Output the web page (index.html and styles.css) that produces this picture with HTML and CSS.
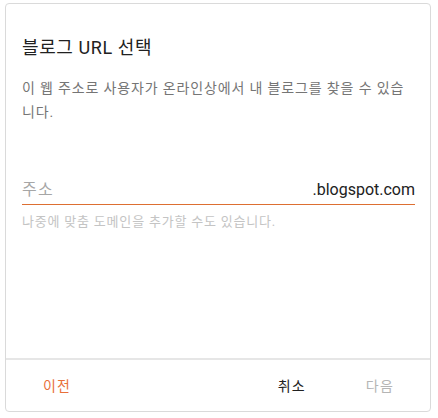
FILE: index.html
```html
<!DOCTYPE html>
<html lang="ko">
<head>
<meta charset="utf-8">
<title>블로그 URL 선택</title>
<link rel="stylesheet" href="styles.css">
</head>
<body>
<div class="dialog">
  <div class="content">
    <h1 class="title">블로그 URL 선택</h1>
    <p class="desc">이 웹 주소로 사용자가 온라인상에서 내 블로그를 찾을 수 있습니다.</p>
    <div class="field">
      <span class="placeholder">주소</span>
      <span class="suffix">.blogspot.com</span>
    </div>
    <p class="hint">나중에 맞춤 도메인을 추가할 수도 있습니다.</p>
  </div>
  <div class="footer">
    <button class="btn btn-prev">이전</button>
    <button class="btn btn-cancel">취소</button>
    <button class="btn btn-next">다음</button>
  </div>
</div>
</body>
</html>
```

FILE: styles.css
```css
* { box-sizing: border-box; }
html, body { margin: 0; padding: 0; background: #fff; }
body {
  font-family: Roboto, "Noto Sans CJK KR", sans-serif;
}
.dialog {
  margin: 3px 0 0 5px;
  width: 426px;
  height: 409px;
  border: 1px solid #dadada;
  border-radius: 4px;
  display: flex;
  flex-direction: column;
  background: #fff;
}
.content {
  flex: 1;
  padding: 32px 15px 0 16px;
}
.title {
  margin: 0;
  font-size: 18px;
  line-height: 24px;
  font-weight: 400;
  color: #212121;
  letter-spacing: 0.6px;
}
.desc {
  margin: 16px 0 0;
  font-size: 14px;
  line-height: 24px;
  color: #757575;
  letter-spacing: 0.85px;
}
.field {
  margin-top: 54px;
  display: flex;
  justify-content: space-between;
  align-items: baseline;
  border-bottom: 1px solid #dd6f32;
  padding-bottom: 2px;
  font-size: 16px;
  line-height: 24px;
}
.placeholder { color: #a6a6a6; letter-spacing: 1.4px; }
.suffix { color: #212121; }
.hint {
  margin: 8px 0 0;
  font-size: 13px;
  line-height: 18px;
  color: #c4c4c4;
  letter-spacing: 0.8px;
}
.footer {
  height: 53px;
  border-top: 2px solid #e6e6e6;
  display: flex;
  align-items: center;
  padding: 0 20px 0 21px;
}
.btn {
  font-family: Roboto, "Noto Sans CJK KR", sans-serif;
  font-size: 14px;
  line-height: 20px;
  background: none;
  border: none;
  padding: 0 16px;
  margin: 0;
  letter-spacing: 1.2px;
}
.btn-prev { color: #e8703a; }
.btn-cancel { color: #212121; margin-left: auto; }
.btn-next { color: #b5b5b5; margin-left: 28px; }
```
